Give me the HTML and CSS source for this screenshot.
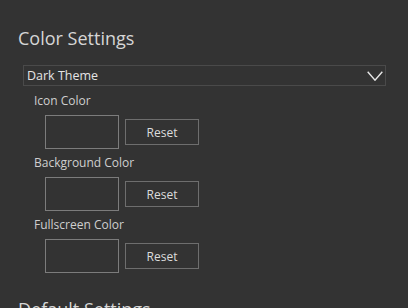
FILE: index.html
```html
<!DOCTYPE html>
<html>

<head>
    <title>Settings</title>
    <link rel="stylesheet" href="styles.css">
</head>

<body>
    <div class="settings">
        <h2>Color Settings</h2>

        <!-- theme picker -->
        <div class="theme_select">
            <span>Dark Theme</span>
            <svg width="16" height="10" viewBox="0 0 16 10">
                <polyline points="0.7,0.7 8,9.2 15.3,0.7" fill="none" stroke="#e6e6e6" stroke-width="1.4"/>
            </svg>
        </div>

        <!-- Icon Color -->
        <div class="color_group">
            <div class="color_label">Icon Color</div>
            <div class="color_row">
                <div class="swatch"></div>
                <button class="reset">Reset</button>
            </div>
        </div>

        <!-- Background Color -->
        <div class="color_group">
            <div class="color_label">Background Color</div>
            <div class="color_row">
                <div class="swatch"></div>
                <button class="reset">Reset</button>
            </div>
        </div>

        <!-- Fullscreen Color -->
        <div class="color_group">
            <div class="color_label">Fullscreen Color</div>
            <div class="color_row">
                <div class="swatch"></div>
                <button class="reset">Reset</button>
            </div>
        </div>

        <h2 class="next">Default Settings</h2>
    </div>
</body>

</html>
```

FILE: styles.css
```css
/* CSS Styles */
* {
    margin: 0;
    padding: 0;
    box-sizing: border-box;
}

body {
    background-color: #333333;
    font-family: "Open Sans", sans-serif;
    color: #cccccc;
}

.settings {
    padding: 26px 22px 0 18px;
}

h2 {
    font-size: 18px;
    line-height: 24px;
    font-weight: normal;
    color: #d6d6d6;
}

h2.next {
    margin-top: 24px;
}

.theme_select {
    display: flex;
    justify-content: space-between;
    align-items: center;
    margin: 15px 0 7px 5px;
    height: 21px;
    padding: 0 2px 0 3px;
    border: 1px solid #4a4a4a;
    font-size: 12.5px;
    line-height: 19px;
    color: #e4e4e4;
}

.color_group {
    padding-left: 16px;
}

.color_label {
    font-size: 12px;
    line-height: 16px;
    color: #cfcfcf;
}

.color_row {
    display: flex;
    align-items: center;
    gap: 6px;
    margin: 6px 0 6px 11px;
}

.swatch {
    width: 74px;
    height: 34px;
    border: 1px solid #7c7c7c;
}

.reset {
    width: 74px;
    height: 26px;
    background-color: #333333;
    border: 1px solid #6e6e6e;
    font-family: "Open Sans", sans-serif;
    font-size: 12px;
    color: #dcdcdc;
}
```
